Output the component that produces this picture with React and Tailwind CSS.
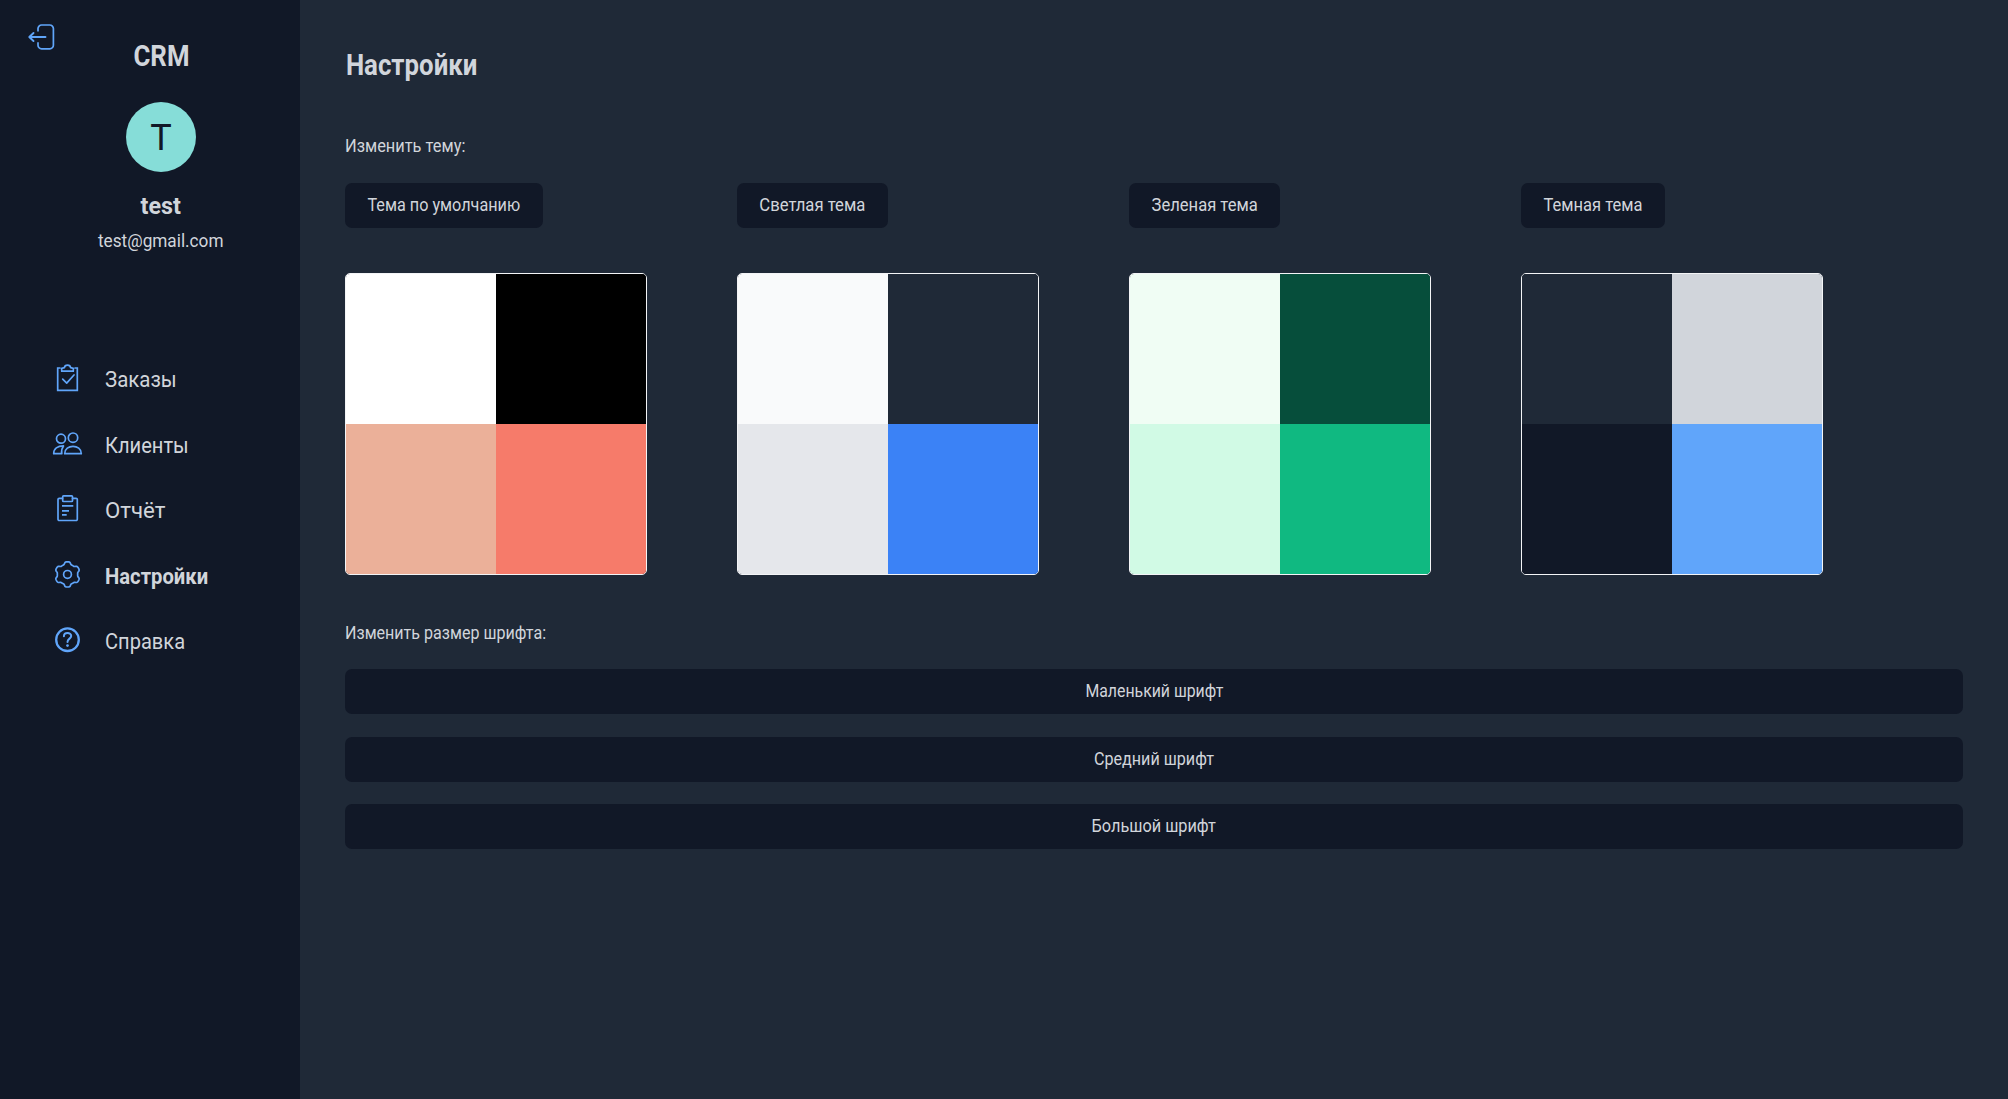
const line = {
  fill: 'none',
  stroke: 'currentColor',
  strokeWidth: 1.7,
  strokeLinecap: 'round',
  strokeLinejoin: 'round',
};

function Icon({ children }) {
  return (
    <svg className="-mt-1 h-[33px] w-[33px] shrink-0 text-[#60a5fa]" viewBox="0 0 33 33" {...line}>
      {children}
    </svg>
  );
}

function LogoutIcon() {
  return (
    <svg className="h-[34px] w-9 text-[#60a5fa]" viewBox="24 20 36 34" {...line}>
      <path d="M38 31.5V28.6a3.6 3.6 0 0 1 3.6-3.6h8.2a3.6 3.6 0 0 1 3.6 3.6v16.6a3.6 3.6 0 0 1-3.6 3.6h-8.2A3.6 3.6 0 0 1 38 45.2V42.3" strokeLinecap="butt" />
      <path d="M45.5 37H29.5M33.5 33l-4.200 4 4.200 4" strokeWidth="1.900" />
    </svg>
  );
}

function OrdersIcon() {
  return (
    <Icon>
      <path d="M9 7H6.700V29.300H26.300V7H24" strokeLinejoin="miter" />
      <path d="M10.700 10.200V7.300L13.400 6.700C13.900 3.300 19.100 3.300 19.600 6.700L22.300 7.300V10.200Z" />
      <path d="M11.700 18.200L15.700 22.100L23 14" />
    </Icon>
  );
}

function ClientsIcon() {
  return (
    <Icon>
      <circle cx="10" cy="11.700" r="4.500" />
      <circle cx="22" cy="10.700" r="4.700" />
      <path d="M2.700 26.700C2.700 22 6.500 18.900 12.500 18.900C10.900 21 10.300 24 10.800 26.700Z" />
      <path d="M13.700 26.700C13.700 16.900 30.300 16.900 30.300 26.700Z" />
    </Icon>
  );
}

function ReportIcon() {
  return (
    <Icon>
      <path d="M11.500 6.300H8.200a1.200 1.200 0 0 0-1.200 1.200V27.300a1.200 1.200 0 0 0 1.200 1.200H25.100a1.200 1.200 0 0 0 1.200-1.200V7.500a1.200 1.200 0 0 0-1.200-1.200H21.500" />
      <rect x="11.700" y="3.900" width="9.800" height="5.600" rx="0.800" />
      <path d="M11 13.800H22.300M11 18.800H18M11 22.800H15.700" strokeLinecap="butt" />
    </Icon>
  );
}

const gearPoints = Array.from({ length: 120 }, (_, i) => {
  const angle = (i / 120) * Math.PI * 2;
  const radius = 11.4 + 1.25 * Math.tanh(2.2 * Math.cos(6 * angle));
  return `${(16.5 + radius * Math.sin(angle)).toFixed(2)},${(16.4 - radius * Math.cos(angle)).toFixed(2)}`;
}).join(' ');

function SettingsIcon() {
  return (
    <Icon>
      <polygon points={gearPoints} />
      <circle cx="16.500" cy="16.400" r="3.900" />
    </Icon>
  );
}

function HelpIcon() {
  return (
    <Icon>
      <circle cx="16.500" cy="16.700" r="11.300" strokeWidth="2.300" />
      <path d="M12.900 13.200C12.900 8.900 20.200 9 20.200 13C20.200 15.700 16.500 15.600 16.500 19" strokeWidth="2" />
      <circle cx="16.500" cy="22.600" r="1.350" fill="currentColor" stroke="none" />
    </Icon>
  );
}

const menu = [
  { label: 'Заказы', icon: OrdersIcon, style: 'scale-x-[.93]' },
  { label: 'Клиенты', icon: ClientsIcon, style: 'scale-x-[.914]' },
  { label: 'Отчёт', icon: ReportIcon, style: 'scale-x-[1.01]' },
  { label: 'Настройки', icon: SettingsIcon, style: 'scale-x-[.92] font-bold' },
  { label: 'Справка', icon: HelpIcon, style: 'scale-x-[.912]' },
];

const themes = [
  {
    label: 'Тема по умолчанию',
    width: 'w-[198px]',
    style: 'scale-x-[.9]',
    colors: ['bg-white', 'bg-black', 'bg-[#ebb099]', 'bg-[#f67b6a]'],
  },
  {
    label: 'Светлая тема',
    width: 'w-[151px]',
    style: 'scale-x-[.925]',
    colors: ['bg-[#f9fafb]', 'bg-[#1f2937]', 'bg-[#e5e7eb]', 'bg-[#3b82f6]'],
  },
  {
    label: 'Зеленая тема',
    width: 'w-[151px]',
    style: 'scale-x-[.92]',
    colors: ['bg-[#f0fdf4]', 'bg-[#064e3b]', 'bg-[#d1fae5]', 'bg-[#10b981]'],
  },
  {
    label: 'Темная тема',
    width: 'w-[144px]',
    style: 'scale-x-[.917]',
    colors: ['bg-[#1f2937]', 'bg-[#d1d5db]', 'bg-[#111827]', 'bg-[#60a5fa]'],
  },
];

const fontSizes = [
  { label: 'Маленький шрифт', style: 'scale-x-[.88]' },
  { label: 'Средний шрифт', style: 'scale-x-[.896]' },
  { label: 'Большой шрифт', style: 'scale-x-[.905]' },
];

export default function App() {
  return (
    <div className="flex h-screen overflow-hidden bg-[#1f2937] font-['Roboto',sans-serif] text-[18px] text-[#d1d5db]">
      <aside className="flex w-[300px] shrink-0 flex-col bg-[#111827]">
        <button className="mt-5 ml-6 self-start" aria-label="Выйти">
          <LogoutIcon />
        </button>
        <div className="-mt-4 flex flex-col items-center pl-[22px]">
          <h1 className="scale-x-[.89] pt-px text-[29px] leading-[35px] font-bold">CRM</h1>
          <div className="mt-7 flex h-[70px] w-[70px] items-center justify-center rounded-full bg-[#86ddd8] pt-px text-[36px] leading-none text-[#111827]">
            T
          </div>
          <h2 className="mt-[18px] scale-x-[.97] text-[24px] leading-8 font-bold">test</h2>
          <p className="mt-[5px] scale-x-[.955] leading-7">test@gmail.com</p>
        </div>
        <nav className="mt-[92px] flex flex-col pl-[51px]">
          {menu.map(({ label, icon: MenuIcon, style }) => (
            <a key={label} className="flex h-[65.5px] items-center gap-[21px] text-[22px]">
              <MenuIcon />
              <span className={`origin-left ${style}`}>{label}</span>
            </a>
          ))}
        </nav>
      </aside>

      <main className="flex grow flex-col p-[45px]">
        <h1 className="origin-left scale-x-[.89] pt-px pl-px text-[29px] leading-[39px] font-bold">Настройки</h1>

        <p className="mt-[47px] origin-left scale-x-[.91] leading-7">Изменить тему:</p>
        <div className="mt-[23px] flex gap-[90px]">
          {themes.map(({ label, width, style, colors }) => (
            <section key={label} className="flex w-[302px] flex-col gap-[45px]">
              <button className={`flex h-[45px] items-center justify-center rounded-[7px] bg-[#111827] pb-0.5 whitespace-nowrap ${width}`}>
                <span className={style}>{label}</span>
              </button>
              <div className="grid h-[302px] grid-cols-2 grid-rows-2 overflow-hidden rounded-[5px] border border-[#f3f4f6]">
                {colors.map((color) => (
                  <div key={color} className={color} />
                ))}
              </div>
            </section>
          ))}
        </div>

        <p className="mt-[44px] origin-left scale-x-[.893] leading-7">Изменить размер шрифта:</p>
        <div className="mt-[22px] flex flex-col gap-[22.5px]">
          {fontSizes.map(({ label, style }) => (
            <button key={label} className="flex h-[45px] items-center justify-center rounded-[7px] bg-[#111827] pb-0.5">
              <span className={style}>{label}</span>
            </button>
          ))}
        </div>
      </main>
    </div>
  );
}
